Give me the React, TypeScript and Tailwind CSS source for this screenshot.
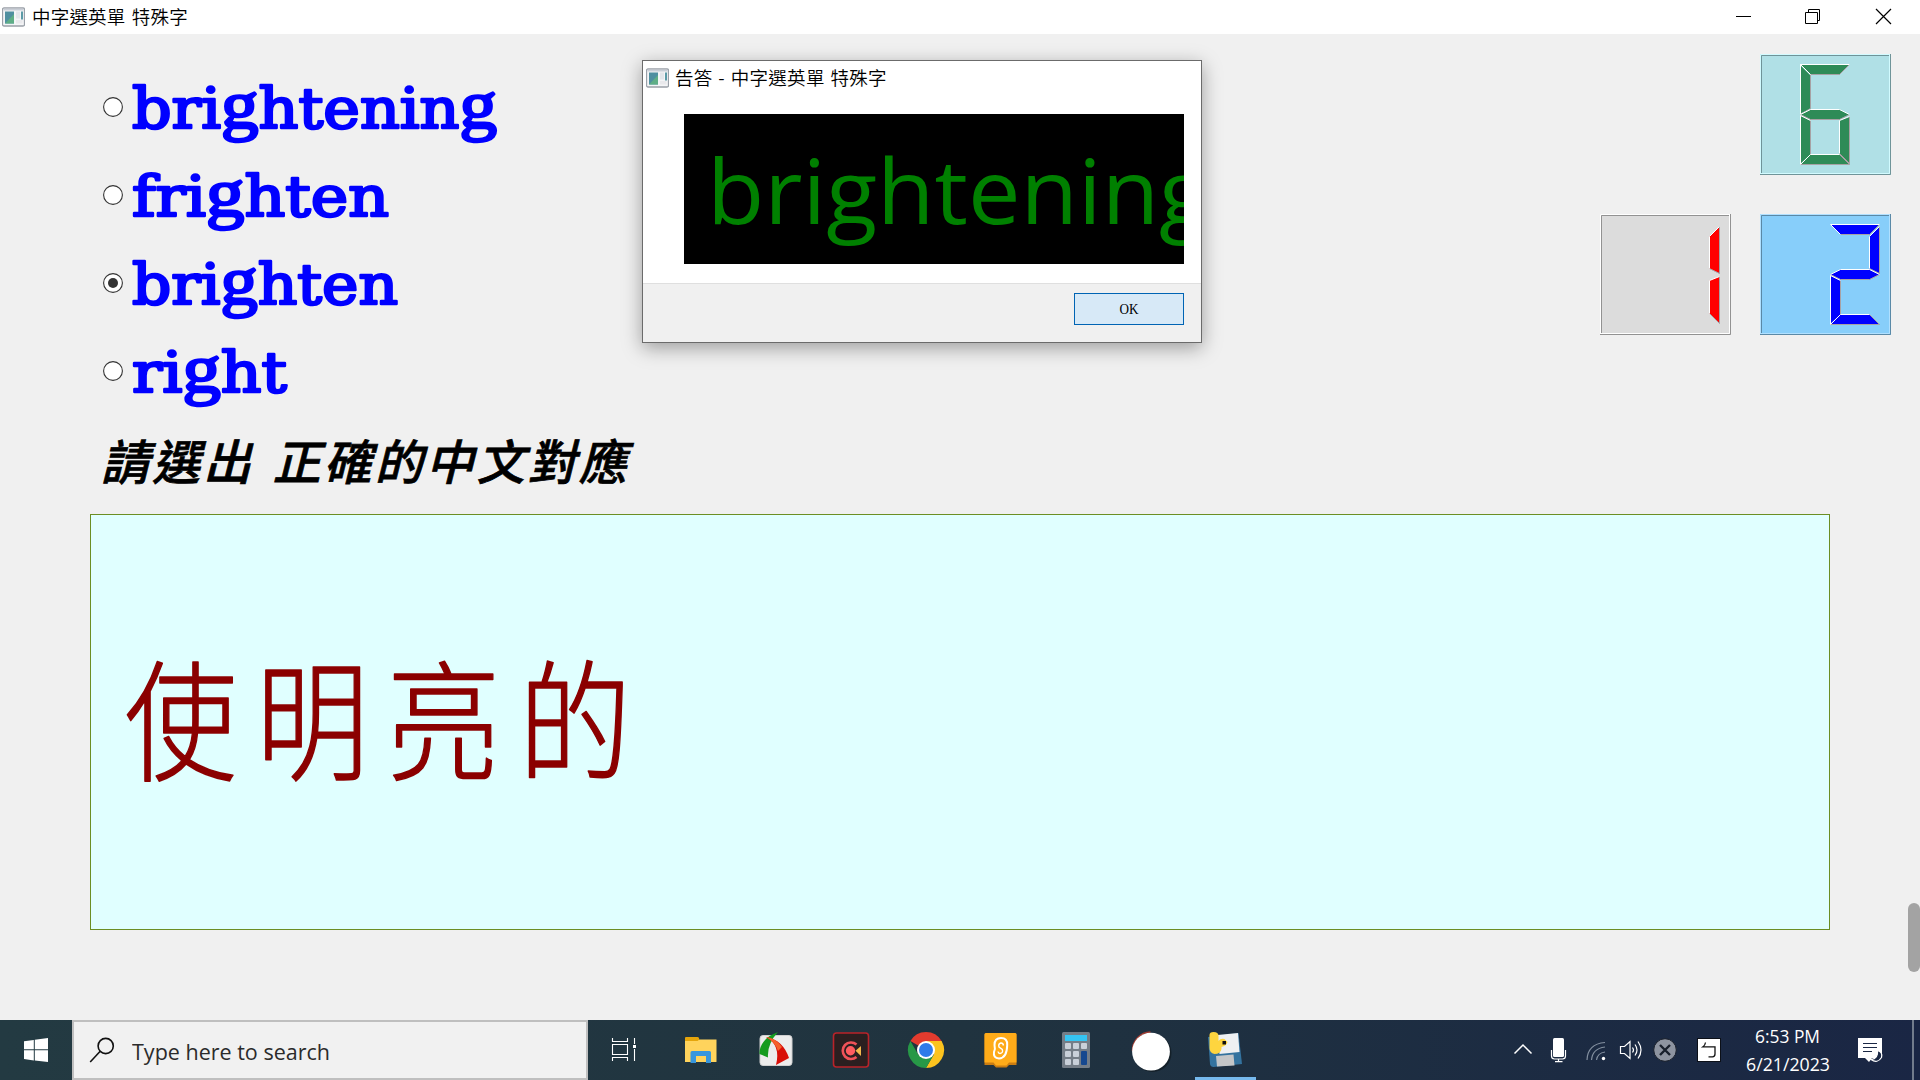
import React from "react";

const UI_FONT = "font-['Noto_Sans_CJK_TC',sans-serif]";

function AppIcon() {
  return (
    <svg width="23" height="20" viewBox="0 0 23 20" className="shrink-0">
      <rect x="0.5" y="1" width="22" height="18" rx="1.5" fill="#f4f5f7" stroke="#9aa0a8" strokeWidth="1.3" />
      <rect x="1.5" y="1.5" width="20" height="2" fill="#c9ced6" />
      <rect x="3" y="4.500" width="9" height="12" fill="#4f8fa0" />
      <path d="M3 16.500 L12 7 V16.500Z" fill="#5fae86" />
      <rect x="14" y="4.500" width="4" height="7" fill="#e3e6ea" />
      <rect x="19" y="4.500" width="2" height="8" fill="#5b9aa6" />
      <rect x="14" y="13" width="6.500" height="3.500" fill="#e9e9ec" />
    </svg>
  );
}

function TitleBar() {
  return (
    <header className="flex h-[34px] shrink-0 items-center bg-white pl-[2px]">
      <AppIcon />
      <span className={`ml-[7px] pb-[2px] text-[18.5px] leading-none tracking-[0.2px] [word-spacing:2px] text-black font-[350] whitespace-pre ${UI_FONT}`}>中字選英單 特殊字</span>
      <div className="ml-auto flex h-full items-center">
        <svg width="72" height="34"><path d="M28 16.500H43" stroke="#000" /></svg>
        <svg width="72" height="34" fill="none" stroke="#000">
          <path d="M25.500 12.500H37.500V23.500H25.500Z M28.500 12.500V9.500H39.500V20.500H37.500" />
        </svg>
        <svg width="68" height="34" stroke="#000" strokeWidth="1.2"><path d="M24 9L39 24M39 9L24 24" /></svg>
      </div>
    </header>
  );
}

function Option({ label, width, selected }: { label: string; width: number; selected?: boolean }) {
  return (
    <label className="flex h-[88px] items-center">
      <svg width="20" height="20" viewBox="0 0 20 20" className="shrink-0">
        <circle cx="10" cy="10" r="9.400" fill="#fff" stroke="#333" strokeWidth="1.1" />
        {selected && <circle cx="10" cy="10" r="5" fill="#333" />}
      </svg>
      <svg width={width + 8} height="88" className="ml-[8px] overflow-visible">
        <text
          x="1"
          y="64.500"
          textLength={width - 1}
          lengthAdjust="spacingAndGlyphs"
          className="fill-[#0000ff] stroke-[#0000ff] font-['DejaVu_Serif',serif] text-[56px]"
          strokeWidth="2.6"
          strokeLinejoin="round"
        >
          {label.split(/(g)/).map((part, i) =>
            part === "g" ? (
              <tspan key={i} className="font-['Liberation_Serif',serif] text-[68px]">g</tspan>
            ) : (
              <tspan key={i}>{part}</tspan>
            ),
          )}
        </text>
      </svg>
    </label>
  );
}

const SEGMENTS: Record<string, { body: string; light: string; dark: string }> = {
  a: { body: "0,0 49,0 39,10 10,10", light: "10,10 0,0 49,0", dark: "49,0 39,10 10,10" },
  f: { body: "0,1 10,11 10,44 0,49", light: "10,10 0,0 0,50", dark: "10,10 10,44 0,50" },
  b: { body: "49,2 49,49 39,44 39,12", light: "49,2 39,12 39,44", dark: "39,44 49,49 49,2" },
  g: { body: "0,50 10,45 39,45 49,50 39,55 10,55", light: "0,50 10,45 39,45 49,50", dark: "49,50 39,55 10,55 0,50" },
  e: { body: "0,51 10,56 10,90 0,99", light: "10,56 0,51 0,100", dark: "10,56 10,90 0,100" },
  c: { body: "49,52 49,99 39,89 39,56", light: "49,52 39,56 39,89", dark: "39,89 49,99 49,52" },
  d: { body: "0,100 10,90 39,90 49,100", light: "0,100 10,90 39,90", dark: "39,90 49,100 0,100" },
};

function Lcd({ segs, x, color, bg, light, dark }: { segs: string; x: number; color: string; bg: string; light: string; dark: string }) {
  return (
    <svg width="131" height="121" viewBox="0 0 131 121" className="shrink-0">
      <rect width="131" height="121" fill={bg} />
      <path d="M0.500 121V0.500H131" fill="none" stroke={light} />
      <path d="M0 120.500H130.500V0" fill="none" stroke={dark} />
      <path d="M1.500 119V1.500H129" fill="none" stroke={dark} />
      <path d="M1 119.500H129.500V1" fill="none" stroke={light} />
      <g transform={`translate(${x + 0.5} 10.5)`}>
        {segs.split("").map((s) => (
          <g key={s}>
            <polygon points={SEGMENTS[s].body} fill={color} />
            <polyline points={SEGMENTS[s].dark} fill="none" stroke="#a7a1a4" />
            <polyline points={SEGMENTS[s].light} fill="none" stroke="#fff" />
          </g>
        ))}
      </g>
    </svg>
  );
}

function Dialog() {
  return (
    <section className="absolute left-[642px] top-[60px] flex h-[283px] w-[560px] flex-col border border-[#6b6b6b] bg-white shadow-[0_5px_18px_rgba(0,0,0,0.35)]">
      <div className="flex h-[34px] shrink-0 items-center pl-[3px]">
        <AppIcon />
        <span className={`ml-[6px] pb-[1px] text-[18.500px] leading-none tracking-[0.3px] [word-spacing:1.3px] text-black font-[350] whitespace-pre ${UI_FONT}`}>告答 - 中字選英單 特殊字</span>
      </div>
      <div className="mt-[19px] ml-[41px] h-[150px] w-[500px] shrink-0 bg-black">
        <svg width="500" height="150" className="block overflow-hidden">
          <text x="23" y="109.500" textLength="503" lengthAdjust="spacingAndGlyphs" className="fill-[#008000] font-['Open_Sans',sans-serif] text-[90px]">brightening</text>
        </svg>
      </div>
      <footer className="mt-auto flex h-[59px] items-start justify-end border-t border-[#dfdfdf] bg-[#f0f0f0] pt-[9px] pr-[17px]">
        <button className="flex h-[32px] w-[110px] shrink-0 items-center justify-center border border-[#0064b4] bg-[#d7e9f7] text-black">
          <svg width="40" height="28" viewBox="0 0 40 28">
            <text x="10.500" y="19" textLength="19" lengthAdjust="spacingAndGlyphs" className="font-['Liberation_Serif',serif] text-[15.500px]">OK</text>
          </svg>
        </button>
      </footer>
    </section>
  );
}

function TaskCell({ children, active }: { children: React.ReactNode; active?: boolean }) {
  return (
    <div className="flex h-full w-[75px] shrink-0 flex-col items-center">
      <svg width="61" height="57" viewBox="0 0 61 57" className="shrink-0">{children}</svg>
      {active && <div className="h-[3px] w-[61px] bg-[#76b9ed]" />}
    </div>
  );
}

function Taskbar() {
  return (
    <footer className="flex h-[60px] shrink-0 bg-linear-to-r from-[#233a42] via-[#20333f] to-[#1a2644]">
      <svg width="72" height="60" viewBox="0 0 72 60" fill="#fff" className="shrink-0">
        <path d="M24 21.300L33.800 19.900V29.300H24ZM34.800 19.800L48 18V29.300H34.800ZM24 30.300H33.800V40.500L24 39.100ZM34.800 30.300H48V42L34.800 40.600Z" />
      </svg>
      <div className="flex h-[60px] w-[516px] shrink-0 items-center border-2 border-[#bfbfbf] bg-[#f1f1f1] pl-[14px]">
        <svg width="30" height="30" viewBox="0 0 30 30" fill="none" stroke="#111" strokeWidth="1.6" className="shrink-0">
          <circle cx="17.700" cy="11" r="7.600" />
          <path d="M12.200 16.300L2.200 27" />
        </svg>
        <svg width="210" height="40" className="ml-[14px]">
          <text x="0" y="29.500" textLength="198" lengthAdjust="spacingAndGlyphs" className="fill-[#2b2b2b] font-['Open_Sans',sans-serif] text-[22.500px]">Type here to search</text>
        </svg>
      </div>
      <TaskCell>
        <g fill="none" stroke="#fff" strokeWidth="1.1">
          <path d="M17.500 18V21.500H32.500V18M17.500 24.500H32.500V34.500H17.500ZM17.500 41V37.500H32.500V41M39.500 18V24M39.500 29V41" />
        </g>
        <rect x="38" y="25" width="3" height="3" fill="#fff" />
      </TaskCell>
      <TaskCell>
        <g transform="translate(0.5 0)">
          <path d="M14.500 17.500Q14.500 17 15.500 17H27Q28 17 28.500 18L29 21H14.500Z" fill="#e5a50b" />
          <path d="M14.500 21H27L29 19.500H46V41.500Q46 42 45.500 42H14.500Z" fill="#ffd35c" />
          <path d="M20 43V32.500Q20 31 21.500 31H39Q40.500 31 40.500 32.500V43H35.500V36H25.500V43Z" fill="#3796dd" />
        </g>
      </TaskCell>
      <TaskCell>
        <g transform="translate(1 0)">
          <rect x="14" y="15.500" width="32" height="30" rx="3" fill="#ececec" stroke="#cfcfcf" />
          <path d="M32 12Q22 16 20 19Q13 26 13.500 34L22 37.500Q21 24 32 12Z" fill="#159b1e" />
          <path d="M20 17Q35 25 30 45L43 38Q37 20 20 17Z" fill="#d80f08" />
          <path d="M20 17Q30 18 36 27L32 31Q29 22 20 17Z" fill="#f5602a" />
        </g>
      </TaskCell>
      <TaskCell>
        <rect x="13.500" y="13" width="35" height="34" rx="3" fill="#2b1f20" stroke="#b92329" strokeWidth="1.600" />
        <path d="M36.500 24.500A8.300 8.300 0 1 0 36.500 37" fill="none" stroke="#f05258" strokeWidth="2.600" />
        <circle cx="30.500" cy="30.700" r="4.700" fill="#ff5c60" />
        <path d="M35.500 30.700L41 26V36Z" fill="#f3b84c" />
      </TaskCell>
      <TaskCell>
        <g transform="translate(0.5 0)">
          <path d="M30.500 30L14.900 21A18 18 0 0 1 46.100 21Z" fill="#e33b2e" />
          <path d="M30.500 21H46.100A18 18 0 0 1 30.500 48L38.300 34.500Z" fill="#fcc31e" />
          <path d="M14.900 21L22.700 34.500L30.500 39L38.300 34.500L30.500 48A18 18 0 0 1 14.900 21Z" fill="#279847" />
          <circle cx="30.500" cy="30" r="9" fill="#fff" />
          <circle cx="30.500" cy="30" r="7" fill="#2f7bea" />
        </g>
      </TaskCell>
      <TaskCell>
        <path d="M16 13H45Q46.500 13 46.500 14.500V45H39L36.500 47.500H26L23.500 45H14.500V14.500Q14.500 13 16 13Z" fill="#cb7d12" />
        <path d="M16 13H45Q46.500 13 46.500 14.500V42.500H39L36.500 45.500H26L23.500 42.500H14.500V14.500Q14.500 13 16 13Z" fill="#ffab19" />
        <path d="M24.500 25Q24.500 18 31 18Q37.500 18 37.200 25Q37 38 29 38.500Q23 38 24 32Q25.500 29 24.500 25Z" fill="none" stroke="#fff" strokeWidth="2" />
        <path d="M33.500 25.500Q33 22.800 30.800 23Q28 24 29 27L32.300 29.500Q33.500 33 30 33.500Q28.300 33.500 28 31.500" fill="none" stroke="#fff" strokeWidth="1.400" />
      </TaskCell>
      <TaskCell>
        <g transform="translate(0.5 0)">
          <rect x="16.500" y="12" width="28" height="36" rx="1.500" fill="#747d87" />
          <rect x="19.500" y="15" width="22" height="6" fill="#35c4f2" />
          {[23, 31, 39].map((y) => [19.5, 27.5, 35.5].map((x) => (
            x > 30 && y > 25 ? null : <rect key={`${x}-${y}`} x={x} y={y} width="6" height="6" rx="1" fill="#c9d0d9" />
          )))}
          <rect x="35.500" y="31" width="6" height="14" rx="1" fill="#16488f" />
        </g>
      </TaskCell>
      <TaskCell>
        <g transform="translate(0.5 0)">
          <circle cx="32" cy="33" r="19" fill="#142029" />
          <path d="M12 31A18.500 18.500 0 0 1 30 12" fill="none" stroke="#a33b30" strokeWidth="1.500" />
          <circle cx="30.500" cy="31.700" r="18.900" fill="#fff" />
        </g>
      </TaskCell>
      <TaskCell active>
        <g transform="translate(0.5 0)">
          <path d="M12.500 17L43 13L46.500 44L18 47Q15 47 14.500 44Z" fill="#34739f" />
          <path d="M22 15L42.500 13L44 32L24 34Z" fill="#eef0f2" />
          <path d="M20.500 36L38 34.500L39 45.500L21.500 46.500Z" fill="#c4c6c8" />
          <path d="M14 15Q14 12 18 12Q23 12 23 16V21Q25 18 29 19L32 22Q31 26 26 27V29Q25 34 19 34Q14 33 14 28Z" fill="#fed53f" />
          <rect x="27" y="21" width="3.500" height="3.500" fill="#111" />
        </g>
      </TaskCell>
      <div className="ml-auto flex h-full shrink-0 text-white">
        <svg width="36" height="60" fill="none" stroke="#fff" strokeWidth="1.500"><path d="M9.500 33.500L18 25L26.500 33.500" /></svg>
        <svg width="36" height="60" viewBox="0 0 36 60">
          <rect x="12" y="18" width="11" height="19" rx="1.500" fill="#fff" />
          <path d="M10.500 30V36Q10.500 39 13.500 39H21.500Q24.500 39 24.500 36V30M17.500 39V41.500M14 41.700H21.500" fill="none" stroke="#fff" strokeWidth="1.200" />
        </svg>
        <svg width="36" height="60" viewBox="0 0 36 60" fill="none" stroke="#8490a0" strokeWidth="1.200">
          <path d="M10 40Q10.500 24 28 22.500M14.500 40Q15.500 28.500 28 27M19.500 40Q20.500 33 28 32" />
          <circle cx="26.500" cy="38.500" r="1.700" fill="#fff" stroke="none" />
        </svg>
        <svg width="36" height="60" viewBox="0 0 36 60" fill="none" stroke="#fff" strokeWidth="1.200">
          <path d="M7.500 26.500H11.500L17 21.500V38.500L11.500 33.500H7.500ZM19.500 27.500Q21.500 30 19.500 32.500M22 24.500Q26 30 22 35.500M25 21.500Q31 30 25 38.500" />
        </svg>
        <svg width="32" height="60" viewBox="0 0 32 60">
          <circle cx="16" cy="30" r="11.300" fill="#8e94a0" stroke="#171d28" strokeWidth="1" />
          <path d="M11 25L21 35M21 25L11 35" stroke="#19202c" strokeWidth="2.400" />
        </svg>
        <svg width="56" height="60" viewBox="0 0 56 60">
          <rect x="16.500" y="18.500" width="23" height="23" fill="#fff" stroke="#0c1018" />
          <path d="M24.500 22.500Q24 25.500 22 26.800H34V34Q34 36.800 31.500 36.800H27.500" fill="none" stroke="#111" strokeWidth="1.300" />
        </svg>
        <svg width="101" height="60" viewBox="0 0 101 60" className="fill-white font-['Open_Sans',sans-serif] text-[17.500px]">
          <text x="18" y="23" textLength="65" lengthAdjust="spacingAndGlyphs">6:53 PM</text>
          <text x="9" y="51" textLength="84" lengthAdjust="spacingAndGlyphs">6/21/2023</text>
        </svg>
        <svg width="64" height="60" viewBox="0 0 64 60">
          <path d="M20 18H44V38H34L31 42L27 38H20Z" fill="#fff" />
          <path d="M25 23.500H39M25 27.500H39M25 31.500H34" stroke="#1b2845" strokeWidth="1.200" />
          <path d="M39.500 30.500Q45 32 43.500 37.500Q39.500 44 33 39.500Q40.500 38.500 39.500 30.500Z" fill="#1b2845" stroke="#fff" strokeWidth="1.200" />
        </svg>
        <div className="ml-[10px] mr-[6px] h-full w-[2px] bg-[#727c8c]" />
      </div>
    </footer>
  );
}

export default function App() {
  return (
    <div className="relative flex h-[1080px] w-[1920px] flex-col overflow-hidden bg-[#f0f0f0]">
      <TitleBar />
      <main className="flex min-h-0 flex-1">
        <div className="flex flex-1 flex-col pl-[90px]">
          <div className="flex h-[480px] shrink-0 justify-between">
            <div className="flex flex-col pl-[13px] pt-[29px]">
              <Option label="brightening" width={366} />
              <Option label="frighten" width={258} />
              <Option label="brighten" width={267} selected />
              <Option label="right" width={156} />
              <svg width="560" height="70" className="mt-[10px] overflow-visible">
                <text x="-2" y="55" strokeWidth="0.7" className="fill-black stroke-black font-['Noto_Sans_CJK_TC',sans-serif] text-[48px] font-medium italic tracking-[3px] [word-spacing:5px]">請選出 正確的中文對應</text>
              </svg>
            </div>
            <div className="flex flex-col items-end gap-[39px] pt-[20px] pr-[17px]">
              <Lcd segs="afgecd" x={40} color="#2e8b57" bg="#b0e0e6" light="#d2fbff" dark="#6f9499" />
              <div className="flex gap-[29px]">
                <Lcd segs="bc" x={70} color="#ff0000" bg="#dcdcdc" light="#ffffff" dark="#929292" />
                <Lcd segs="abged" x={70} color="#0000ff" bg="#87cefa" light="#b0e0ff" dark="#5a89a7" />
              </div>
            </div>
          </div>
          <div className="flex h-[416px] w-[1740px] shrink-0 items-center border border-[#6b8e23] bg-[#e0ffff] pl-[32px]">
            <svg width="520" height="200" className="overflow-visible">
              <g transform="translate(1.5 148) scale(0.88 1.01)">
                <text x="0" y="0" textLength="576" lengthAdjust="spacing" strokeWidth="1.5" strokeLinejoin="round" className="fill-[#8b0000] stroke-[#8b0000] font-['Noto_Sans_CJK_TC',sans-serif] text-[128px] font-light">使明亮的</text>
              </g>
            </svg>
          </div>
        </div>
        <div className="flex w-[12px] flex-col pt-[869px]">
          <div className="h-[69px] w-[12px] rounded-full bg-[#a3a3a3]" />
        </div>
      </main>
      <Taskbar />
      <Dialog />
    </div>
  );
}
